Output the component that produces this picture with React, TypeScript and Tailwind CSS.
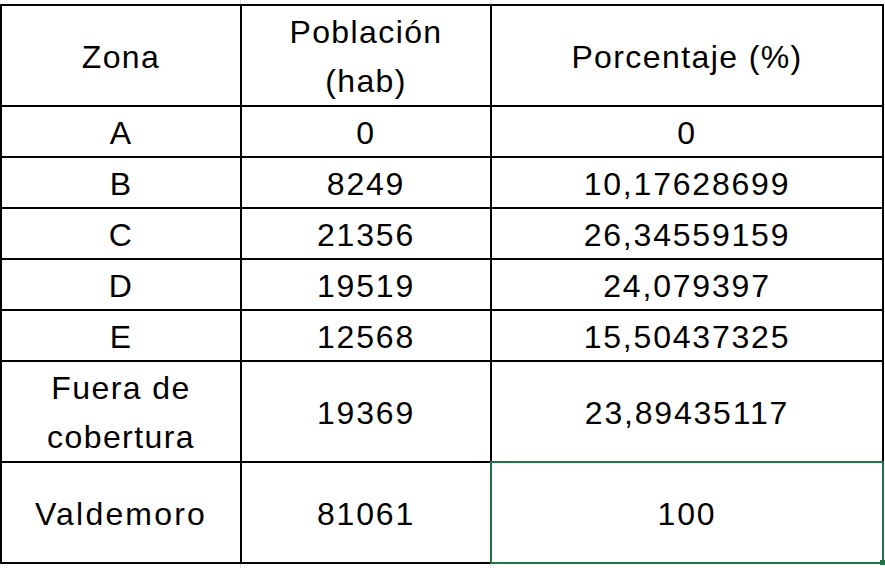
import React from "react";

const rows: { z: string; p: string; c: string }[] = [
  { z: "A", p: "0", c: "0" },
  { z: "B", p: "8249", c: "10,17628699" },
  { z: "C", p: "21356", c: "26,34559159" },
  { z: "D", p: "19519", c: "24,079397" },
  { z: "E", p: "12568", c: "15,50437325" },
];

function Cell({ children, extra = "" }: { children: React.ReactNode; extra?: string }) {
  return (
    <div className={`bg-white flex items-center justify-center text-center pt-[3px] ${extra}`}>
      <div>{children}</div>
    </div>
  );
}

export default function App() {
  return (
    <div
      className="w-[885px] h-[568px] bg-white overflow-hidden text-black text-[32px] leading-[49px] tracking-[1.4px]"
      style={{ fontFamily: '"Liberation Sans", Arial, sans-serif' }}
    >
      <div className="flex h-[4px]">
        <div className="w-[240px]" />
        <div className="w-[1px] bg-[#e1e1e1]" />
        <div className="w-[249px]" />
        <div className="w-[1px] bg-[#e1e1e1]" />
      </div>
      <div className="w-[884px] bg-black p-[2px] grid grid-cols-[238px_248px_390px] grid-rows-[99px_49px_49px_49px_49px_49px_99px_99px] gap-[2px]">
        <Cell>Zona</Cell>
        <Cell>
          Población
          <br />
          (hab)
        </Cell>
        <Cell>Porcentaje (%)</Cell>
        {rows.map((r, i) => (
          <React.Fragment key={i}>
            <Cell>{r.z}</Cell>
            <Cell extra="tracking-[1.8px]">{r.p}</Cell>
            <Cell extra="tracking-[1.8px]">{r.c}</Cell>
          </React.Fragment>
        ))}
        <Cell>
          Fuera de
          <br />
          cobertura
        </Cell>
        <Cell extra="tracking-[1.8px]">19369</Cell>
        <Cell extra="tracking-[1.8px]">23,89435117</Cell>
        <Cell extra="tracking-[2.2px]">Valdemoro</Cell>
        <Cell extra="tracking-[1.8px]">81061</Cell>
        <div className="relative bg-white flex items-center justify-center pt-[3px] tracking-[1.8px]">
          <div>100</div>
          <div className="absolute -inset-[2px] border-2 border-[#217346]" />
          <div className="absolute -right-[3px] -bottom-[3px] w-[5px] h-[5px] bg-[#217346]" />
        </div>
      </div>
      <div className="flex h-[4px]">
        <div className="w-[240px]" />
        <div className="w-[1px] bg-[#e1e1e1]" />
        <div className="w-[249px]" />
        <div className="w-[1px] bg-[#e1e1e1]" />
      </div>
    </div>
  );
}
